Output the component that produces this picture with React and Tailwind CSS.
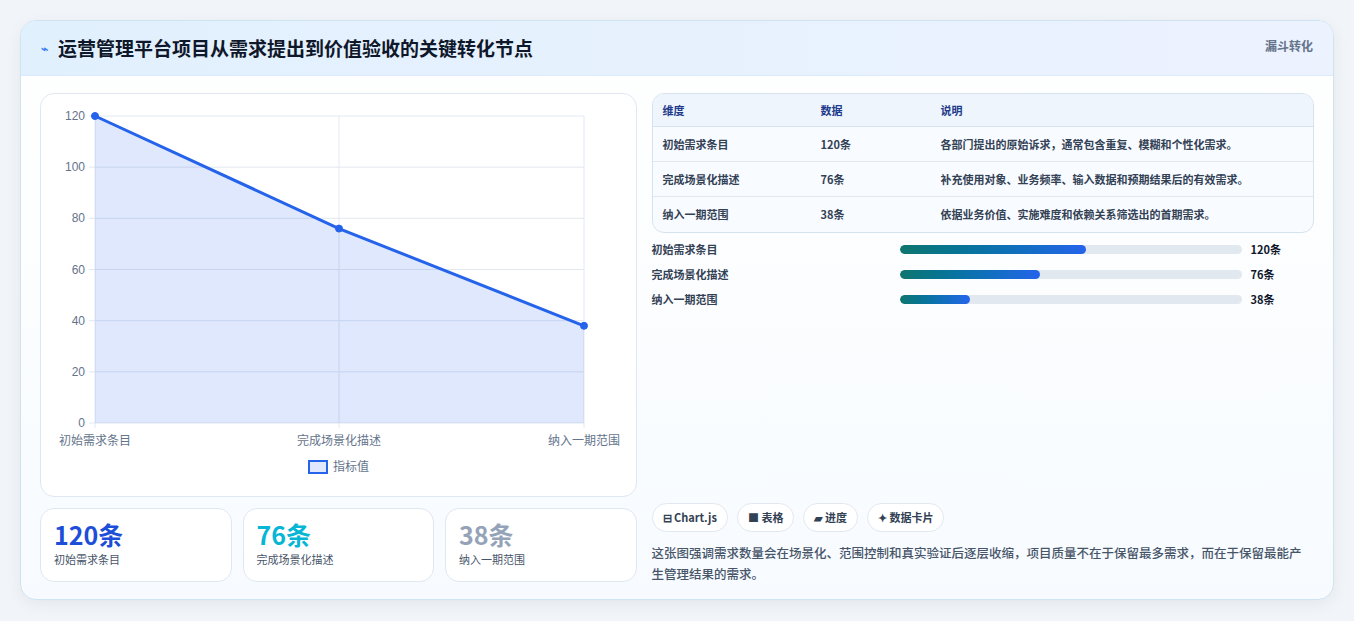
export default function App() {
  const font = { fontFamily: '"Noto Sans CJK SC", "Noto Sans", sans-serif' };
  const rows = [
    ["初始需求条目", "120条", "各部门提出的原始诉求，通常包含重复、模糊和个性化需求。", 54.4],
    ["完成场景化描述", "76条", "补充使用对象、业务频率、输入数据和预期结果后的有效需求。", 41.2],
    ["纳入一期范围", "38条", "依据业务价值、实施难度和依赖关系筛选出的首期需求。", 20.5],
  ];
  const x0 = 54, x1 = 298, x2 = 543, yTop = 22, yBot = 329;
  const yv = (v) => yBot - (v / 120) * (yBot - yTop);
  const pts = [[x0, yv(120)], [x1, yv(76)], [x2, yv(38)]];
  return (
    <div className="w-[1354px] h-[621px] bg-[#f1f5f9] pt-[20px] pl-[20px]" style={font}>
      <div className="w-[1314px] h-[580px] rounded-[16px] border border-[#cfe3f1] bg-gradient-to-b from-white to-[#f7fbff] overflow-hidden shadow-[0_4px_16px_rgba(15,23,42,0.06)]">
        <div className="h-[55px] flex items-center justify-between px-[20px] bg-gradient-to-r from-[#e1f0fd] to-[#edf2ff] border-b border-[#dbeafe]">
          <div className="flex items-center gap-[10px]">
            <span className="text-[#3b82f6] text-[12px] font-bold">⌁</span>
            <span className="text-[19px] font-bold text-[#0f172a]">运营管理平台项目从需求提出到价值验收的关键转化节点</span>
          </div>
          <span className="text-[12px] font-bold text-[#64748b] self-start mt-[16px]">漏斗转化</span>
        </div>
        <div className="flex gap-[15px] px-[19px] pt-[17px]">
          <div className="w-[597px] flex flex-col gap-[11px]">
            <div className="h-[404px] rounded-[14px] border border-[#dfe7f1] bg-white relative">
              <svg width="597" height="404" className="absolute left-0 top-0" style={{ fontFamily: '"Liberation Sans", sans-serif' }}>
                {[0, 20, 40, 60, 80, 100, 120].map((v) => (
                  <g key={v}>
                    <line x1={x0 - 6} x2={x2} y1={yv(v)} y2={yv(v)} stroke="#e2e8f0" />
                    <text x={x0 - 10} y={yv(v) + 4} textAnchor="end" fontSize="12" fill="#64748b">{v}</text>
                  </g>
                ))}
                {[x0, x1, x2].map((x) => <line key={x} x1={x} x2={x} y1={yTop} y2={yBot + 5} stroke="#e2e8f0" />)}
                <polygon points={`${x0},${yBot} ${pts.map((p) => p.join(",")).join(" ")} ${x2},${yBot}`} fill="rgba(37,99,235,0.15)" />
                <polyline points={pts.map((p) => p.join(",")).join(" ")} fill="none" stroke="#2563eb" strokeWidth="3" />
                {pts.map((p, i) => <circle key={i} cx={p[0]} cy={p[1]} r="3.5" fill="#2563eb" stroke="#2563eb" />)}
                <text x={x0} y={351} textAnchor="middle" fontSize="12" fill="#64748b" style={font}>初始需求条目</text>
                <text x={x1} y={351} textAnchor="middle" fontSize="12" fill="#64748b" style={font}>完成场景化描述</text>
                <text x={x2} y={351} textAnchor="middle" fontSize="12" fill="#64748b" style={font}>纳入一期范围</text>
                <rect x="268" y="367" width="18" height="12" fill="rgba(37,99,235,0.15)" stroke="#2563eb" strokeWidth="2" />
                <text x="292" y="377" fontSize="12" fill="#64748b" style={font}>指标值</text>
              </svg>
            </div>
            <div className="grid grid-cols-3 gap-[11px]">
              {[["120条", "text-[#1d4ed8]", "初始需求条目"], ["76条", "text-[#06b6d4]", "完成场景化描述"], ["38条", "text-[#94a3b8]", "纳入一期范围"]].map(([v, c, l]) => (
                <div key={l} className="h-[74px] rounded-[14px] border border-[#dfe7f1] bg-white px-[13px] pt-[10px]">
                  <div className={`text-[25px] font-bold leading-[30px] ${c}`}>{v}</div>
                  <div className="text-[11px] text-[#475569] mt-[2px]">{l}</div>
                </div>
              ))}
            </div>
          </div>
          <div className="w-[663px] flex flex-col">
            <div className="rounded-[12px] border border-[#d6e2ee] overflow-hidden bg-[#f8fbff]">
              <div className="flex h-[33px] items-center bg-[#eef5fd] border-b border-[#d6e2ee] text-[11px] font-bold text-[#1e3a8a]">
                <div className="w-[168px] pl-[10px]">维度</div><div className="w-[120px]">数据</div><div>说明</div>
              </div>
              {rows.map((r, i) => (
                <div key={i} className={`flex h-[35px] items-center text-[11px] font-bold text-[#334155] ${i < 2 ? "border-b border-[#e2e8f0]" : ""}`}>
                  <div className="w-[168px] pl-[10px]">{r[0]}</div><div className="w-[120px]">{r[1]}</div><div>{r[2]}</div>
                </div>
              ))}
            </div>
            <div className="flex flex-col gap-[10px] mt-[9px]">
              {rows.map((r, i) => (
                <div key={i} className="flex items-center h-[15px] text-[11px] font-bold text-[#334155]">
                  <div className="w-[248px]">{r[0]}</div>
                  <div className="w-[342px] h-[9px] rounded-full bg-[#e2e8f0] overflow-hidden">
                    <div className="h-full rounded-full bg-gradient-to-r from-[#0f766e] to-[#2563eb]" style={{ width: `${r[3]}%` }} />
                  </div>
                  <div className="ml-[9px] text-[#0f172a]">{r[1]}</div>
                </div>
              ))}
            </div>
            <div className="flex gap-[9px] mt-[196px]">
              {["⊟ Chart.js", "■ 表格", "▰ 进度", "✦ 数据卡片"].map((t) => (
                <span key={t} className="h-[29px] px-[10px] flex items-center rounded-full border border-[#e2e8f0] bg-white text-[11px] font-bold text-[#334155]">{t}</span>
              ))}
            </div>
            <p className="mt-[10px] w-[655px] text-[12.5px] leading-[21px] text-[#475569] font-medium">这张图强调需求数量会在场景化、范围控制和真实验证后逐层收缩，项目质量不在于保留最多需求，而在于保留最能产生管理结果的需求。</p>
          </div>
        </div>
      </div>
    </div>
  );
}
